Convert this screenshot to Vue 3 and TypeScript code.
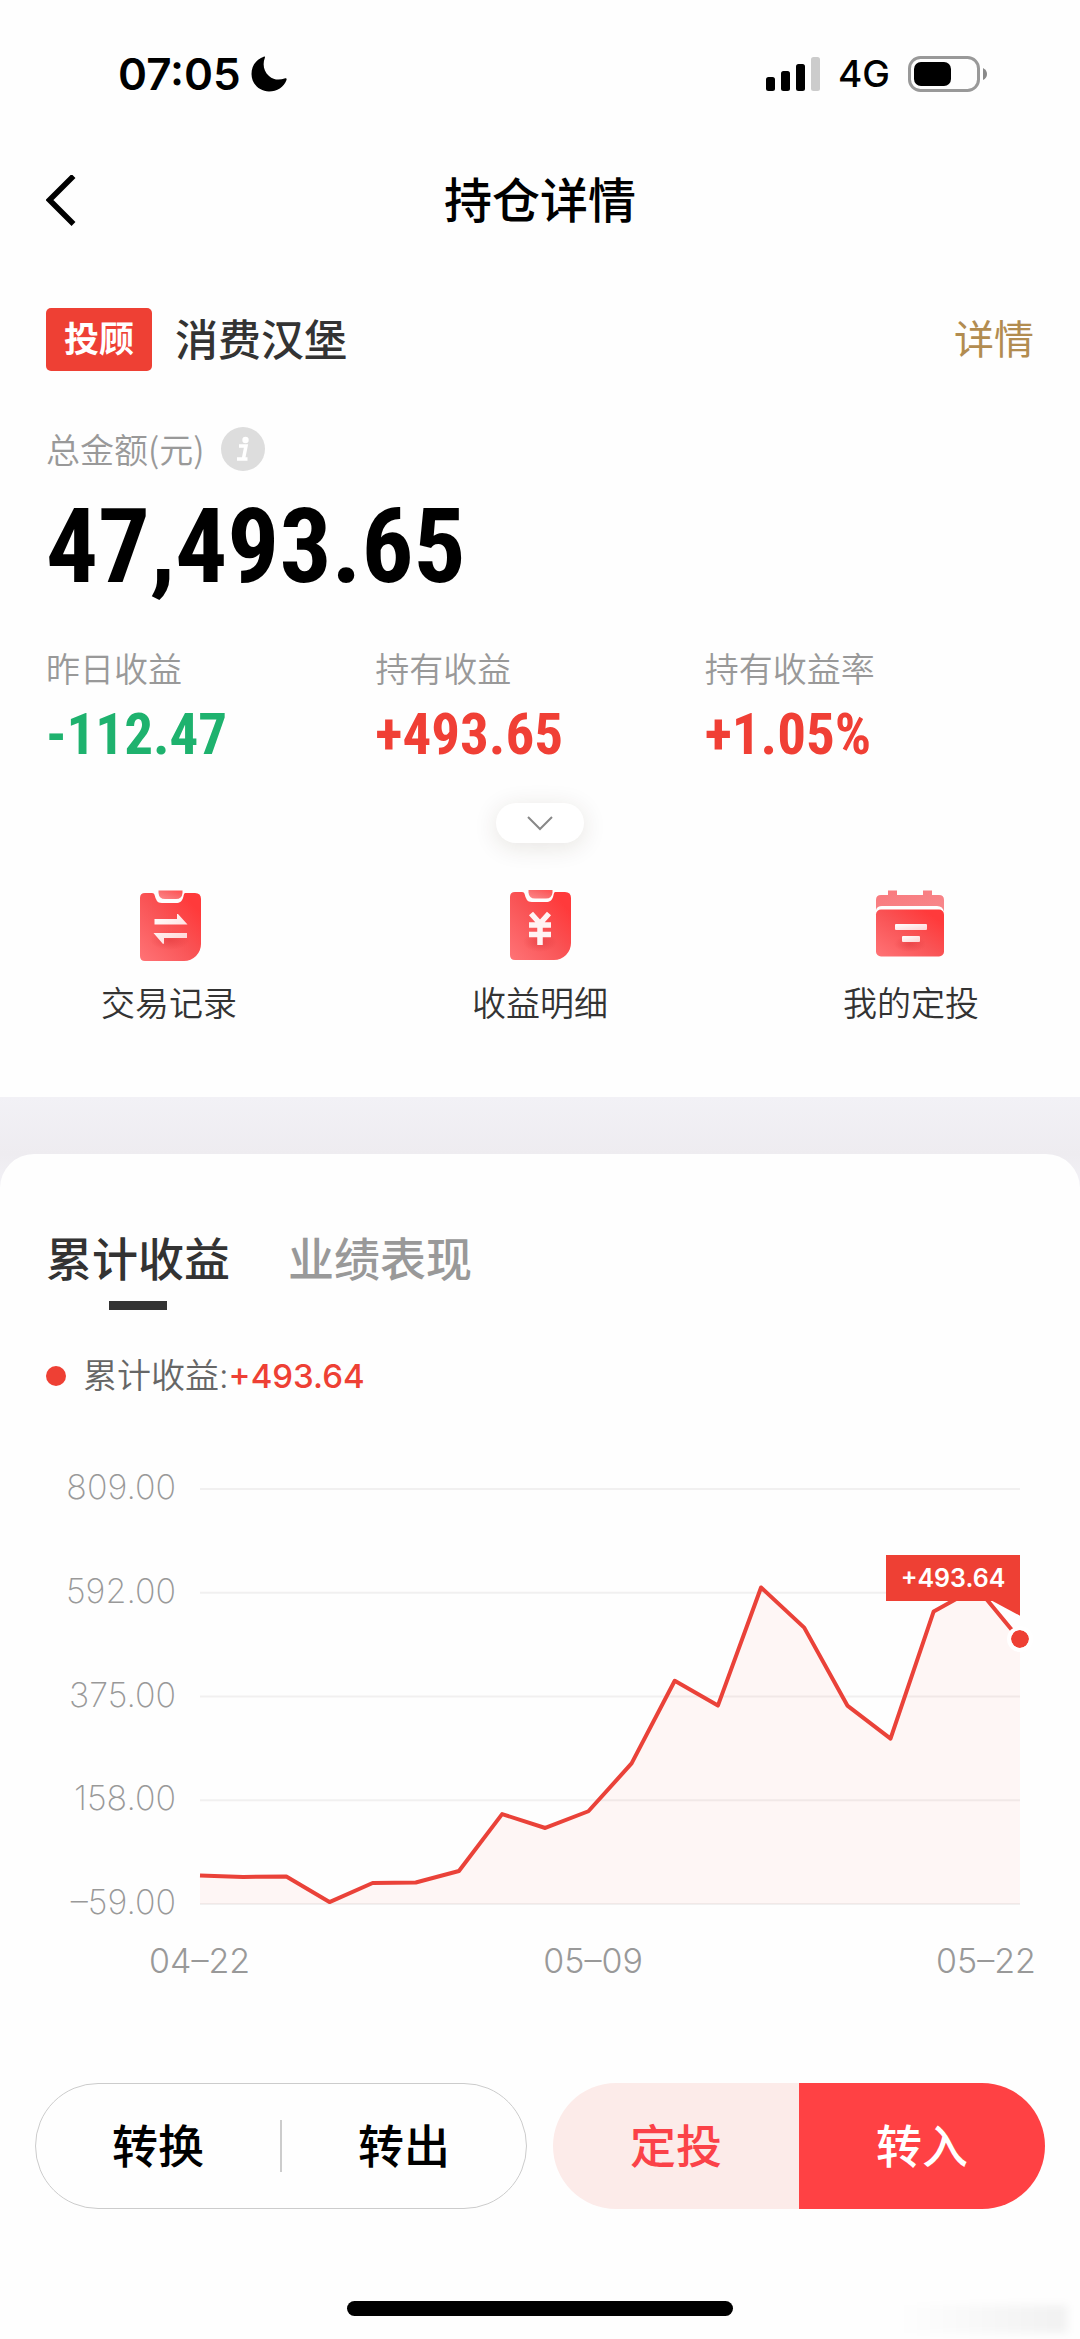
<script setup lang="ts">
import { computed, ref } from 'vue'

interface Stat {
  label: string
  value: string
  trend: 'up' | 'down'
}

const stats: Stat[] = [
  { label: '昨日收益', value: '-112.47', trend: 'down' },
  { label: '持有收益', value: '+493.65', trend: 'up' },
  { label: '持有收益率', value: '+1.05%', trend: 'up' },
]

const tabs = ['累计收益', '业绩表现']
const activeTab = ref(tabs[0])

const ticks = [809, 592, 375, 158, -59]
const dates = ['04–22', '05–09', '05–22']
const series = [
  0.6, -2.5, -1.5, -55, -15, -14, 10, 129, 100, 135, 235, 408, 356, 603, 519,
  356, 287, 553, 603, 493.64,
]

const top = ticks[0]
const span = top - ticks[ticks.length - 1]

// The drawing space is 1000 × 1000 and is stretched over the plot area.
const points = computed(() =>
  series
    .map((v, i) => `${(i * 1000) / (series.length - 1)},${((top - v) * 1000) / span}`)
    .join(' '),
)
const area = computed(() => `0,1000 ${points.value} 1000,1000`)
const lastTop = computed(() => `${((top - series[series.length - 1]) * 100) / span}%`)

function tickLabel(v: number): string {
  return v.toFixed(2).replace('-', '–')
}
</script>

<template>
  <div class="page">
    <div class="status">
      <div class="status-side">
        <span class="clock">07:05</span>
        <svg class="moon" viewBox="0 0 36 36" aria-hidden="true">
          <path d="M13.200 0.500 C5 3.500 0.500 10 0.500 18 C0.500 28 8.500 35.500 18 35.500 C26 35.500 33 31 35.500 24 C36 22.500 35 22 33.500 22.500 C29 24 23 24.500 18 20 C12.500 15 11.500 8 13.800 2 C14.200 0.800 14 0.200 13.200 0.500Z" />
        </svg>
      </div>
      <div class="status-side status-right">
        <svg class="signal" viewBox="0 0 54 34" aria-hidden="true">
          <rect x="0" y="20" width="9" height="14" rx="2.500" />
          <rect x="15" y="14" width="9" height="20" rx="2.500" />
          <rect x="30" y="7" width="9" height="27" rx="2.500" />
          <rect x="45" y="0" width="9" height="34" rx="2.500" fill="#ccc" />
        </svg>
        <span class="network">4G</span>
        <svg class="battery" viewBox="0 0 80 36" aria-hidden="true">
          <rect x="1.500" y="1.500" width="69" height="33" rx="11" fill="none" stroke="#999" stroke-width="3" />
          <rect x="6" y="6" width="37" height="24" rx="7" />
          <path d="M75 12 Q79 14 79 18 Q79 22 75 24Z" fill="#8a8a8a" />
        </svg>
      </div>
    </div>

    <header class="nav">
      <button class="back" type="button" aria-label="返回">
        <svg viewBox="0 0 30 52" aria-hidden="true">
          <path d="M27.500 1 L3.500 25 L27.500 49" fill="none" stroke="#000" stroke-width="5.500" />
        </svg>
      </button>
      <h1>持仓详情</h1>
    </header>

    <section class="summary">
      <div class="product">
        <span class="badge">投顾</span>
        <h2>消费汉堡</h2>
        <a href="#detail">详情</a>
      </div>

      <div class="amount-label">
        <span>总金额(元)</span>
        <button class="info" type="button" aria-label="说明">
          <svg viewBox="0 0 44 44" aria-hidden="true">
            <circle cx="22" cy="22" r="22" fill="#ddd" />
            <circle cx="24.500" cy="13" r="3.200" fill="#fff" />
            <path d="M18 19 H25 L22.500 31.500 M16 32 H26.500" fill="none" stroke="#fff" stroke-width="3.500" />
          </svg>
        </button>
      </div>
      <div class="amount">47,493.65</div>

      <dl class="stats">
        <div v-for="s in stats" :key="s.label">
          <dt>{{ s.label }}</dt>
          <dd :class="s.trend">{{ s.value }}</dd>
        </div>
      </dl>

      <button class="expand" type="button" aria-label="展开">
        <svg viewBox="0 0 26 15" aria-hidden="true">
          <path d="M1 1 L13 13 L25 1" fill="none" stroke="#888" stroke-width="2" />
        </svg>
      </button>
    </section>

    <nav class="shortcuts">
      <svg class="defs" aria-hidden="true">
        <defs>
          <linearGradient id="red" x1="0" y1="1" x2="1" y2="0">
            <stop offset="0" stop-color="#ff7376" />
            <stop offset="0.500" stop-color="#f95355" />
            <stop offset="0.850" stop-color="#ff3a3b" />
          </linearGradient>
          <linearGradient id="pale" x1="0" y1="0" x2="1" y2="1">
            <stop offset="0" stop-color="#f9797d" />
            <stop offset="1" stop-color="#f7888c" />
          </linearGradient>
          <linearGradient id="white" x1="0" y1="0" x2="1" y2="1">
            <stop offset="0" stop-color="#fff" />
            <stop offset="1" stop-color="#ffd3d3" />
          </linearGradient>
          <radialGradient id="shade">
            <stop offset="0" stop-color="#d92f33" stop-opacity="0.450" />
            <stop offset="1" stop-color="#d92f33" stop-opacity="0" />
          </radialGradient>
        </defs>
      </svg>
      <a href="#trades">
        <svg viewBox="0 0 72 72" aria-hidden="true">
          <path d="M12 3 H19 C22 3 21.500 6 23 9 C24 12 26 13 29 13 H43 C47 13 49 11 50 8 C51 5 50.500 3 53 3 H62 Q68 3 68 9 V54 A17 17 0 0 1 51 71 H12 Q7 71 7 66 V8 Q7 3 12 3Z" fill="url(#red)" />
          <path d="M25.500 0.500 H49.500 V3 Q49 9 43 9 H32 Q26 9 25.500 3Z" fill="url(#red)" opacity="0.850" />
          <ellipse cx="37" cy="50" rx="20" ry="10" fill="url(#shade)" />
          <path d="M21.500 29 H44 V24 L45 24 L54.500 34.500 H21.500Z M54 48 H31 V53.500 L30 54 L20.500 43 H54Z" fill="url(#white)" />
        </svg>
        <span>交易记录</span>
      </a>
      <a href="#earnings">
        <svg viewBox="0 0 72 72" aria-hidden="true">
          <path d="M11 2 H18 C21 2 20.500 5 22 8 C23 11 25 12 28 12 H42 C46 12 48 10 49 7 C50 4 49.500 2 52 2 H61 Q67 2 67 8 V53 A17 17 0 0 1 50 70 H11 Q6 70 6 65 V7 Q6 2 11 2Z" fill="url(#red)" />
          <path d="M24.500 0 H48.500 V2.500 Q48 8.500 42 8.500 H31 Q25 8.500 24.500 2.500Z" fill="url(#red)" opacity="0.850" />
          <ellipse cx="36" cy="52" rx="17" ry="10" fill="url(#shade)" />
          <path d="M27 23.500 L36 33.500 L45 23.500 M25 35 H47 M25 44.500 H47 M36 33 V55" fill="none" stroke="#fff3f3" stroke-width="5.500" />
        </svg>
        <span>收益明细</span>
      </a>
      <a href="#plan">
        <svg viewBox="0 0 72 72" aria-hidden="true">
          <path d="M13 0.500 H22 V5 H48 V0.500 H57 V5 H64 Q69 5 69 10 V22 Q68 16 62 16 H7 Q2 16 1 20 V10 Q1 5 6 5 H13Z" fill="url(#pale)" />
          <rect x="1" y="19.500" width="68" height="47" rx="5" fill="url(#red)" />
          <ellipse cx="35" cy="54" rx="16" ry="8" fill="url(#shade)" />
          <rect x="20" y="34" width="32" height="6" rx="1" fill="url(#white)" />
          <rect x="27" y="46" width="18" height="6" rx="1" fill="url(#white)" />
        </svg>
        <span>我的定投</span>
      </a>
    </nav>

    <main class="band">
      <section class="card">
        <div class="tabs" role="tablist">
          <button
            v-for="t in tabs"
            :key="t"
            type="button"
            role="tab"
            :aria-selected="t === activeTab"
            :class="{ active: t === activeTab }"
            @click="activeTab = t"
          >
            {{ t }}
          </button>
        </div>

        <div class="legend">
          <i class="dot"></i>
          <span>累计收益:</span><strong>+493.64</strong>
        </div>

        <div class="chart">
          <div class="ticks">
            <span v-for="t in ticks" :key="t">{{ tickLabel(t) }}</span>
          </div>
          <div class="plot">
            <svg viewBox="0 0 1000 1000" preserveAspectRatio="none" aria-hidden="true">
              <line v-for="(t, i) in ticks" :key="t" x1="0" x2="1000" :y1="i * 250" :y2="i * 250" class="grid" />
              <polygon :points="area" class="area" />
              <polyline :points="points" class="line" />
            </svg>
            <div class="marker" :style="{ top: lastTop }">
              <span class="tip">+493.64</span>
            </div>
          </div>
        </div>
        <div class="dates">
          <span v-for="d in dates" :key="d">{{ d }}</span>
        </div>
      </section>
    </main>

    <footer class="dock">
      <div class="pill outline">
        <button type="button">转换</button>
        <i></i>
        <button type="button">转出</button>
      </div>
      <div class="pill">
        <button type="button" class="soft">定投</button>
        <button type="button" class="solid">转入</button>
      </div>
    </footer>
    <div class="home-area"><div class="home-bar"></div></div>
    <div class="smudge"></div>
  </div>
</template>

<style>
body {
  margin: 0;
  background: #fefefe;
}
</style>

<style scoped>
.page {
  position: relative;
  min-height: 100vh;
  overflow: hidden;
  font-family: Inter, "Noto Sans CJK SC", sans-serif;
  font-size: 34px;
  line-height: 44px;
  color: #333;
  background: #fefefe;
}

button {
  padding: 0;
  border: 0;
  background: none;
  color: inherit;
  font: inherit;
  cursor: pointer;
}

a {
  color: inherit;
  text-decoration: none;
}

svg {
  display: block;
}

.status {
  display: flex;
  justify-content: space-between;
  align-items: center;
  height: 147px;
  padding: 0 92px 0 118px;
  color: #000;
}

.status-side {
  display: flex;
  align-items: center;
  gap: 10px;
}

.status-right {
  gap: 18px;
}

.clock {
  font-size: 44px;
  font-weight: 600;
}

.moon {
  width: 36px;
  height: 36px;
}

.signal {
  width: 54px;
  height: 34px;
}

.network {
  font-size: 37px;
  font-weight: 500;
}

.battery {
  width: 80px;
  height: 36px;
}

.nav {
  display: grid;
  grid-template-columns: 1fr auto 1fr;
  align-items: center;
  height: 107px;
  padding: 0 46px;
  color: #000;
}

.back svg {
  width: 30px;
  height: 52px;
}

.nav h1 {
  margin: 0;
  font-size: 48px;
  font-weight: 500;
  line-height: 60px;
}

.summary {
  padding: 54px 46px 0;
}

.product {
  display: flex;
  align-items: center;
}

.badge {
  padding: 0 18px;
  border-radius: 5px;
  background: #ee4034;
  color: #fff;
  font-size: 35px;
  font-weight: 700;
  line-height: 63px;
}

.product h2 {
  flex: 1;
  margin: 0 0 0 23px;
  font-size: 43px;
  font-weight: 500;
  line-height: 60px;
}

.product a {
  color: #b28c50;
  font-size: 40px;
}

.amount-label {
  display: flex;
  align-items: center;
  gap: 16px;
  margin-top: 56px;
  color: #999;
  font-family: "Noto Sans CJK SC", sans-serif;
  font-weight: 350;
}

.info svg {
  width: 44px;
  height: 44px;
}

.amount {
  margin-top: 26px;
  color: #000;
  font-family: "Roboto Condensed", Roboto, sans-serif;
  font-size: 103px;
  font-weight: 700;
  line-height: 100px;
}

.stats {
  display: grid;
  grid-template-columns: repeat(3, 1fr);
  margin: 51px 0 0;
}

.stats dt {
  color: #999;
  font-weight: 350;
}

.stats dd {
  margin: 18px 0 0;
  font-family: "Roboto Condensed", Roboto, sans-serif;
  font-size: 57px;
  font-weight: 700;
  line-height: 50px;
}

.up {
  color: #f03f35;
}

.down {
  color: #1eb26e;
}

.expand {
  display: flex;
  align-items: center;
  justify-content: center;
  width: 88px;
  height: 40px;
  margin: 43px auto 0;
  border-radius: 20px;
  background: #fff;
  box-shadow: 0 4px 24px rgba(60, 40, 20, 0.12);
}

.expand svg {
  width: 26px;
  height: 15px;
}

.shortcuts {
  display: flex;
  justify-content: space-between;
  padding: 47px 101px 71px;
}

.defs {
  position: absolute;
  width: 0;
  height: 0;
}

.shortcuts a {
  display: flex;
  flex-direction: column;
  align-items: center;
  gap: 20px;
  font-weight: 350;
}

.shortcuts a svg {
  width: 72px;
  height: 72px;
}

.band {
  padding-top: 57px;
  overflow: hidden;
  background: linear-gradient(#f2f1f6, #eeecf0 57px, #f2f1f6 90px);
}

.card {
  padding: 75px 44px 0 46px;
  border-radius: 34px 34px 0 0;
  background: #fefefe;
}

.tabs {
  display: flex;
  gap: 58px;
}

.tabs button {
  display: flex;
  flex-direction: column;
  align-items: center;
  gap: 12px;
  color: #999;
  font-size: 46px;
  font-weight: 500;
  line-height: 60px;
}

.tabs button::after {
  content: "";
  width: 58px;
  height: 9px;
}

.tabs .active {
  color: #333;
}

.tabs .active::after {
  background: #333;
}

.legend {
  display: flex;
  align-items: center;
  margin-top: 44px;
  color: #666;
}

.legend span {
  font-weight: 350;
}

.dot {
  width: 20px;
  height: 20px;
  margin-right: 17px;
  border-radius: 50%;
  background: #ee4034;
}

.legend strong {
  color: #ee4034;
  font-size: 33px;
  font-weight: 500;
}

.chart {
  display: flex;
  gap: 24px;
  margin-top: 91px;
  padding-right: 16px;
}

.ticks {
  display: flex;
  flex-direction: column;
  justify-content: space-between;
  width: 130px;
  margin: -24px 0 -20px;
  color: #999;
  font-weight: 200;
  text-align: right;
}

.plot {
  position: relative;
  flex: 1;
  height: 415px;
}

.plot svg {
  width: 100%;
  height: 100%;
  overflow: visible;
}

.grid {
  stroke: #f1f0f0;
  stroke-width: 2;
  vector-effect: non-scaling-stroke;
}

.area {
  fill: rgba(255, 64, 52, 0.045);
}

.line {
  fill: none;
  stroke: #ea4239;
  stroke-width: 4;
  stroke-linejoin: round;
  vector-effect: non-scaling-stroke;
}

.marker {
  position: absolute;
  left: 100%;
  width: 18px;
  height: 18px;
  margin: -14px -13px;
  border: 4px solid #fff;
  border-radius: 50%;
  background: #ee4034;
  background-clip: padding-box;
}

.tip {
  position: absolute;
  right: 9px;
  bottom: 47px;
  width: 134px;
  background: #ee4034;
  color: #fff;
  font-size: 25px;
  font-weight: 600;
  line-height: 46px;
  text-align: center;
}

.tip::after {
  content: "";
  position: absolute;
  top: 100%;
  right: 0;
  width: 28px;
  height: 15px;
  background: #ee4034;
  clip-path: polygon(0 0, 100% 0, 100% 100%);
}

.dates {
  display: flex;
  justify-content: space-between;
  margin: 35px 0 0 103px;
  color: #999;
  font-weight: 300;
}

.dock {
  display: grid;
  grid-template-columns: 1fr 1fr;
  gap: 26px;
  padding: 100px 35px 0;
}

.pill {
  display: flex;
  align-items: center;
  height: 126px;
  overflow: hidden;
  border-radius: 63px;
  color: #000;
  font-size: 46px;
  font-weight: 500;
}

.outline {
  box-sizing: border-box;
  border: 1px solid #ccc;
}

.pill button {
  flex: 1;
  align-self: stretch;
}

.pill i {
  width: 2px;
  height: 52px;
  background: #ccc;
}

.pill .soft {
  background: #fcebe9;
  color: #fb4248;
}

.pill .solid {
  background: #ff4144;
  color: #fff;
}

.home-area {
  padding: 92px 0 23px;
}

.home-bar {
  width: 386px;
  height: 15px;
  margin: 0 auto;
  border-radius: 8px;
  background: #000;
}

.smudge {
  position: absolute;
  right: 13px;
  bottom: 6px;
  width: 170px;
  height: 28px;
  background: linear-gradient(90deg, rgba(0, 0, 0, 0), rgba(0, 0, 0, 0.05));
  filter: blur(4px);
}
</style>
